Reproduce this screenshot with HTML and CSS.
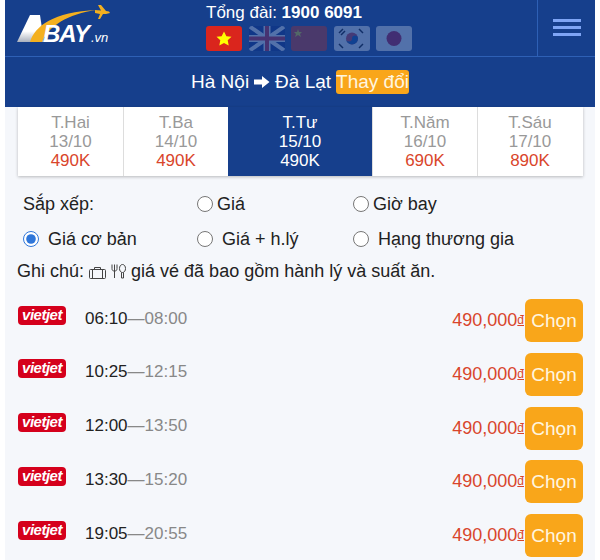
FILE: index.html
```html
<!DOCTYPE html>
<html lang="en">
<head>
    <meta charset="UTF-8">
    <title>Abay.vn</title>
    <link rel="stylesheet" href="styles.css">
</head>
<body>
<div class="page">
    <header class="top">
        <a class="logo" href="#">
            <svg class="logo-art" width="100" height="45" viewBox="0 0 100 45">
                <defs>
                    <linearGradient id="logoShade" x1="0" y1="0" x2="0" y2="1">
                        <stop offset="0.6" stop-color="#fff"/>
                        <stop offset="1" stop-color="#a9b0bd"/>
                    </linearGradient>
                </defs>
                <path d="M0 36 L13 9 L23 9 L27 36 Z" fill="url(#logoShade)"/>
                <path d="M13 36 C18 20 36 6 80 4 C50 8 32 20 25 36 Z" fill="#f4b01f"/>
                <path d="M78 4 L84 4.5 L81 -1 L84 -1 L89 5 L92 5.5 L93 7 L89 8 L86 8 L83 13 L81 13 L83 8 L78 7 Z" fill="#f4b01f"/>
                <text x="26" y="36" class="logo-bay">BAY</text>
                <text x="74" y="36" class="logo-vn">.vn</text>
            </svg>
        </a>
        <div class="hotline">
            <div class="phone">Tổng đài: <b>1900 6091</b></div>
            <div class="flags">
                <svg class="flag" viewBox="0 0 36 25"><rect width="36" height="25" fill="#da251d"/><polygon points="18,5.5 20.4,10.2 25.5,10.8 21.7,14.3 22.7,19.5 18,17 13.3,19.5 14.3,14.3 10.5,10.8 15.6,10.2" fill="#ff0"/></svg>
                <svg class="flag dim" viewBox="0 0 36 25"><rect width="36" height="25" fill="#00247d"/><path d="M0 0L36 25M36 0L0 25" stroke="#fff" stroke-width="4"/><path d="M18 0V25M0 12.5H36" stroke="#fff" stroke-width="7"/><path d="M18 0V25M0 12.5H36" stroke="#cf142b" stroke-width="4"/></svg>
                <svg class="flag dim" viewBox="0 0 36 25"><rect width="36" height="25" fill="#de2910"/><polygon points="7,3 8,6 11,6 9,8 10,11 7,9 4,11 5,8 3,6 6,6" fill="#ffde00"/></svg>
                <svg class="flag dim" viewBox="0 0 36 25"><rect width="36" height="25" fill="#fff"/><circle cx="18" cy="12.5" r="6" fill="#cd2e3a"/><path d="M12 12.5a3 3 0 0 0 6 0a3 3 0 0 1 6 0a6 6 0 0 1-12 0z" fill="#0047a0"/><path d="M5 7l4-4M7 9l4-4M25 3l4 4M27 5l2 2M5 18l4 4M25 22l4-4M27 20l2-2" stroke="#000" stroke-width="1.5"/></svg>
                <svg class="flag dim" viewBox="0 0 36 25"><rect width="36" height="25" fill="#fff"/><circle cx="18" cy="12.5" r="7.5" fill="#bc002d"/></svg>
            </div>
        </div>
        <button class="menu-btn" aria-label="Menu"><span></span><span></span><span></span></button>
    </header>

    <div class="route">
        <span>Hà Nội</span>
        <svg class="route-arrow" width="16" height="14" viewBox="0 0 16 14"><path d="M0 4.5H8V1L15.5 7L8 13V9.5H0Z" fill="#fff"/></svg>
        <span>Đà Lạt</span>
        <a class="change" href="#">Thay đổi</a>
    </div>

    <div class="days">
        <div class="day"><div>T.Hai</div><div>13/10</div><div class="day-price">490K</div></div>
        <div class="day"><div>T.Ba</div><div>14/10</div><div class="day-price">490K</div></div>
        <div class="day active"><div>T.Tư</div><div>15/10</div><div class="day-price">490K</div></div>
        <div class="day"><div>T.Năm</div><div>16/10</div><div class="day-price">690K</div></div>
        <div class="day"><div>T.Sáu</div><div>17/10</div><div class="day-price">890K</div></div>
    </div>

    <form class="sort">
        <div class="sort-label">Sắp xếp:</div>
        <label class="opt"><input type="radio" name="sort">Giá</label>
        <label class="opt"><input type="radio" name="sort">Giờ bay</label>
        <label class="opt wide first"><input type="radio" name="fare" checked>Giá cơ bản</label>
        <label class="opt wide"><input type="radio" name="fare">Giá + h.lý</label>
        <label class="opt wide"><input type="radio" name="fare">Hạng thương gia</label>
    </form>

    <div class="note">
        Ghi chú:
        <svg class="note-icon" width="17" height="13" viewBox="0 0 17 13" fill="none" stroke="#444" stroke-width="1"><rect x="0.5" y="3.5" width="16" height="9" rx="1"/><path d="M5.5 3.5V1.5H11.5V3.5M3.5 3.5V12.5M13.5 3.5V12.5"/></svg>
        <svg class="note-icon" width="15" height="16" viewBox="0 0 15 15" fill="none" stroke="#444" stroke-width="1"><path d="M1 1V5C1 7 2 7.5 3.5 7.5C5 7.5 6 7 6 5V1M3.5 1V14.5"/><path d="M11.5 9C9.5 9 8.5 7 8.5 5C8.5 3 9.5 1 11.5 1C13.5 1 14.5 3 14.5 5C14.5 7 13.5 9 11.5 9ZM10.5 9V14.5H12.5V9"/></svg>
        giá vé đã bao gồm hành lý và suất ăn.
    </div>

    <div class="flights">
        <div class="flight">
            <span class="airline">vietjet</span>
            <span class="times">06:10<span class="arrive">—08:00</span></span>
            <span class="price">490,000<u>đ</u></span>
            <a class="pick" href="#">Chọn</a>
        </div>
        <div class="flight">
            <span class="airline">vietjet</span>
            <span class="times">10:25<span class="arrive">—12:15</span></span>
            <span class="price">490,000<u>đ</u></span>
            <a class="pick" href="#">Chọn</a>
        </div>
        <div class="flight">
            <span class="airline">vietjet</span>
            <span class="times">12:00<span class="arrive">—13:50</span></span>
            <span class="price">490,000<u>đ</u></span>
            <a class="pick" href="#">Chọn</a>
        </div>
        <div class="flight">
            <span class="airline">vietjet</span>
            <span class="times">13:30<span class="arrive">—15:20</span></span>
            <span class="price">490,000<u>đ</u></span>
            <a class="pick" href="#">Chọn</a>
        </div>
        <div class="flight">
            <span class="airline">vietjet</span>
            <span class="times">19:05<span class="arrive">—20:55</span></span>
            <span class="price">490,000<u>đ</u></span>
            <a class="pick" href="#">Chọn</a>
        </div>
    </div>
</div>
</body>
</html>
```

FILE: styles.css
```css
html, body {
    margin: 0;
    padding: 0;
    background-color: #fff;
    height: 100%;
    overflow: hidden;
}
body {
    font-family: "Liberation Sans", Arial, sans-serif;
    color: #222;
}
.page {
    width: 590px;
    height: 560px;
    margin-left: 5px;
    background-color: #f5f7fb;
    overflow: hidden;
}
.top {
    display: flex;
    height: 56px;
    background-color: #163f8c;
    border-bottom: 1px solid #2e60b5;
}
.logo {
    width: 162px;
    padding: 6px 0 0 12px;
    box-sizing: border-box;
    display: block;
}
.logo-art {
    display: block;
    overflow: visible;
}
.logo-bay {
    font-family: "Liberation Sans", Arial, sans-serif;
    font-size: 24px;
    font-weight: bold;
    font-style: italic;
    fill: #fff;
    letter-spacing: -1px;
}
.logo-vn {
    font-family: "Liberation Sans", Arial, sans-serif;
    font-size: 13px;
    font-style: italic;
    fill: #fff;
}
.hotline {
    flex: 1;
    padding-top: 3px;
    padding-left: 39px;
    color: #fff;
}
.phone {
    font-size: 17px;
    line-height: 20px;
}
.flags {
    display: flex;
    gap: 6.5px;
    margin-top: 3px;
}
.flag {
    width: 36px;
    height: 25px;
    border-radius: 3px;
}
.dim {
    opacity: 0.26;
}
.menu-btn {
    width: 58px;
    height: 56px;
    padding: 0 14px 2px 15px;
    background: none;
    border: none;
    border-left: 1px solid #2e60b5;
    display: flex;
    flex-direction: column;
    justify-content: center;
    gap: 4px;
}
.menu-btn span {
    display: block;
    height: 3px;
    background-color: #7fa5f5;
}
.route {
    height: 50px;
    background-color: #163f8c;
    color: #fff;
    font-size: 19px;
    display: flex;
    align-items: center;
    justify-content: center;
    gap: 5px;
}
.change {
    background-color: #f9a61a;
    color: #fff6e0;
    text-decoration: none;
    padding: 1px 0;
    border-radius: 3px;
    line-height: 22px;
}
.days {
    display: flex;
    margin: 0 12px 0 13px;
    height: 69px;
    background-color: #fff;
    box-shadow: 0 1px 3px rgba(0, 0, 0, 0.25);
}
.day {
    width: 105px;
    border-left: 1px solid #ddd;
    box-sizing: border-box;
    text-align: center;
    font-size: 17px;
    line-height: 19px;
    color: #999;
    padding-top: 6px;
}
.day:first-child {
    border-left: none;
}
.day.active {
    width: 144px;
    background-color: #163f8c;
    color: #fff;
    border-left: none;
}
.day-price {
    color: #d9452b;
}
.active .day-price {
    color: #fff;
}
.sort {
    display: grid;
    grid-template-columns: 174px 156px 1fr;
    row-gap: 13px;
    padding: 17px 0 0 18px;
    font-size: 18px;
    line-height: 22px;
}
.opt {
    display: flex;
    align-items: center;
}
.opt input {
    width: 16px;
    height: 16px;
    margin: 0 4px 0 0;
    accent-color: #2f76d9;
}
.opt.wide input {
    margin-right: 9px;
}
.note {
    font-size: 18px;
    line-height: 20px;
    padding: 11px 0 0 12px;
}
.note-icon {
    vertical-align: -2px;
}
.flights {
    padding-top: 18px;
}
.flight {
    display: flex;
    align-items: center;
    height: 43px;
    margin-bottom: 10.75px;
    padding: 0 12px 0 13px;
}
.airline {
    width: 48px;
    height: 19px;
    margin-top: -11px;
    border-radius: 4px;
    background-color: #d5001c;
    color: #fff;
    font-size: 15px;
    font-weight: bold;
    font-style: italic;
    line-height: 18px;
    text-align: center;
    letter-spacing: -0.5px;
}
.times {
    margin-left: 19px;
    margin-top: -4px;
    font-size: 17px;
    color: #222;
}
.arrive {
    color: #888;
}
.price {
    margin-left: auto;
    margin-right: 1px;
    font-size: 18px;
    color: #d9452b;
}
.price u {
    font-size: 12px;
    vertical-align: 2px;
}
.pick {
    width: 58px;
    height: 43px;
    line-height: 43px;
    border-radius: 6px;
    background-color: #f9a61a;
    color: #fff6e0;
    font-size: 19px;
    text-align: center;
    text-decoration: none;
}
```
